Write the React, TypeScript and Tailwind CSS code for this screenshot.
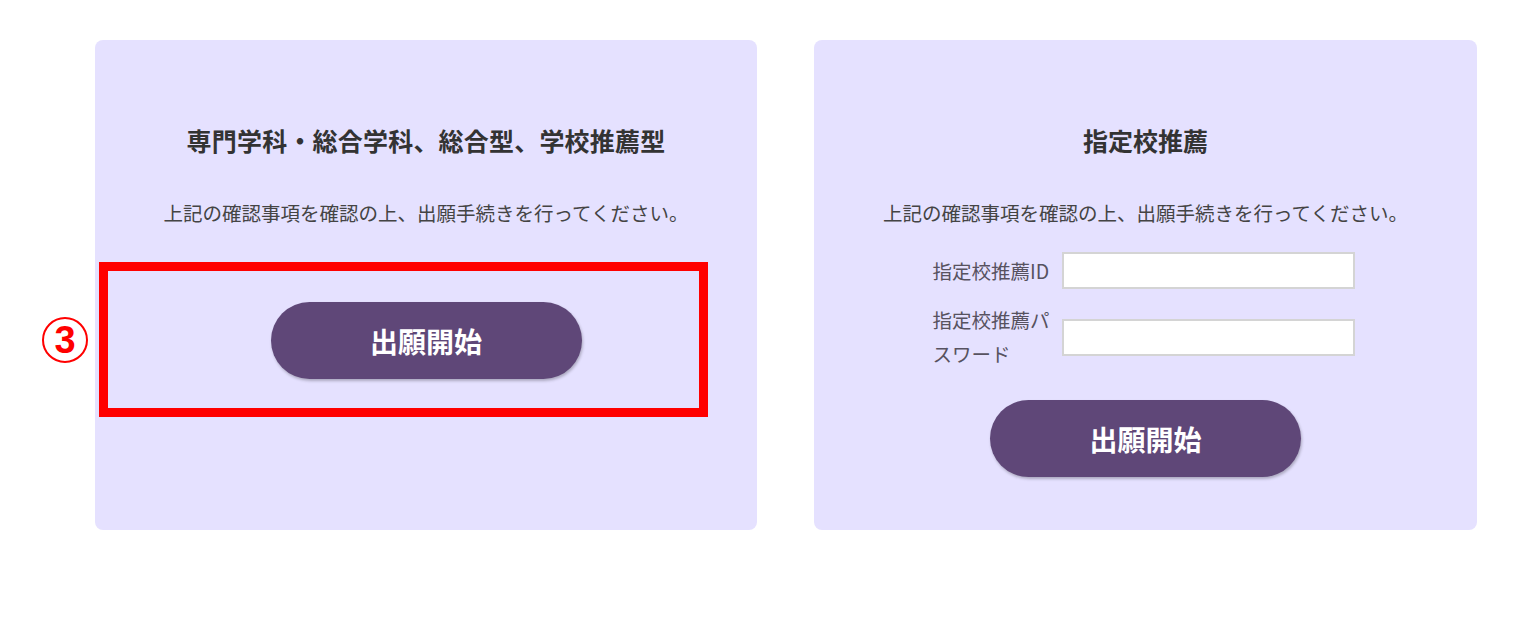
const jp = "font-['Meiryo','Noto_Sans_CJK_JP',sans-serif]";

function StartButton() {
  return (
    <button className="flex h-[77px] w-[311px] items-center justify-center rounded-full bg-[#5f4778] text-[28px] font-bold text-white shadow-[1px_2px_3px_rgba(0,0,0,0.25)]">
      出願開始
    </button>
  );
}

function Field({ label }: { label: React.ReactNode }) {
  return (
    <div className="flex items-center gap-[7px]">
      <label className="w-[122px] whitespace-nowrap text-[19.5px] leading-[34px] text-[#575260]">
        {label}
      </label>
      <input className="h-[37px] w-[293px] border-2 border-[#d4d4d4] bg-white" />
    </div>
  );
}

export default function App() {
  return (
    <div className={`min-h-[627px] bg-white ${jp}`}>
      <div className="flex gap-[57px] pl-[95px] pt-[40px]">
        <section className="relative flex h-[490px] w-[662px] flex-col items-center rounded-lg bg-[#e5e1ff] pt-[82px]">
          <h2 className="text-[25px] font-bold leading-[36px] tracking-[0.2px] text-[#333]">
            専門学科・総合学科、総合型、学校推薦型
          </h2>
          <p className="mt-[40px] text-[19.5px] leading-[30px] text-[#444]">
            上記の確認事項を確認の上、出願手続きを行ってください。
          </p>
          <div className="mt-[74px]">
            <StartButton />
          </div>

          {/* annotation */}
          <div className="absolute left-[4px] top-[222px] h-[155px] w-[609px] border-[9px] border-[#ff0000]" />
          <div className="absolute left-[-53px] top-[277px] flex h-[46px] w-[46px] items-center justify-center rounded-full border-2 border-[#ff0000] pb-[1px] text-[38px] font-bold leading-none text-[#ff0000] font-['Liberation_Sans',sans-serif]">
            3
          </div>
        </section>

        <section className="flex h-[490px] w-[663px] flex-col items-center rounded-lg bg-[#e5e1ff] pt-[82px]">
          <h2 className="text-[25px] font-bold leading-[36px] text-[#333]">指定校推薦</h2>
          <p className="mt-[40px] text-[19.5px] leading-[30px] text-[#444]">
            上記の確認事項を確認の上、出願手続きを行ってください。
          </p>
          <div className="mt-[24px] mr-[4px] flex flex-col gap-[14px]">
            <Field label="指定校推薦ID" />
            <Field
              label={
                <>
                  指定校推薦パ
                  <br />
                  スワード
                </>
              }
            />
          </div>
          <div className="mt-[29px]">
            <StartButton />
          </div>
        </section>
      </div>
    </div>
  );
}
